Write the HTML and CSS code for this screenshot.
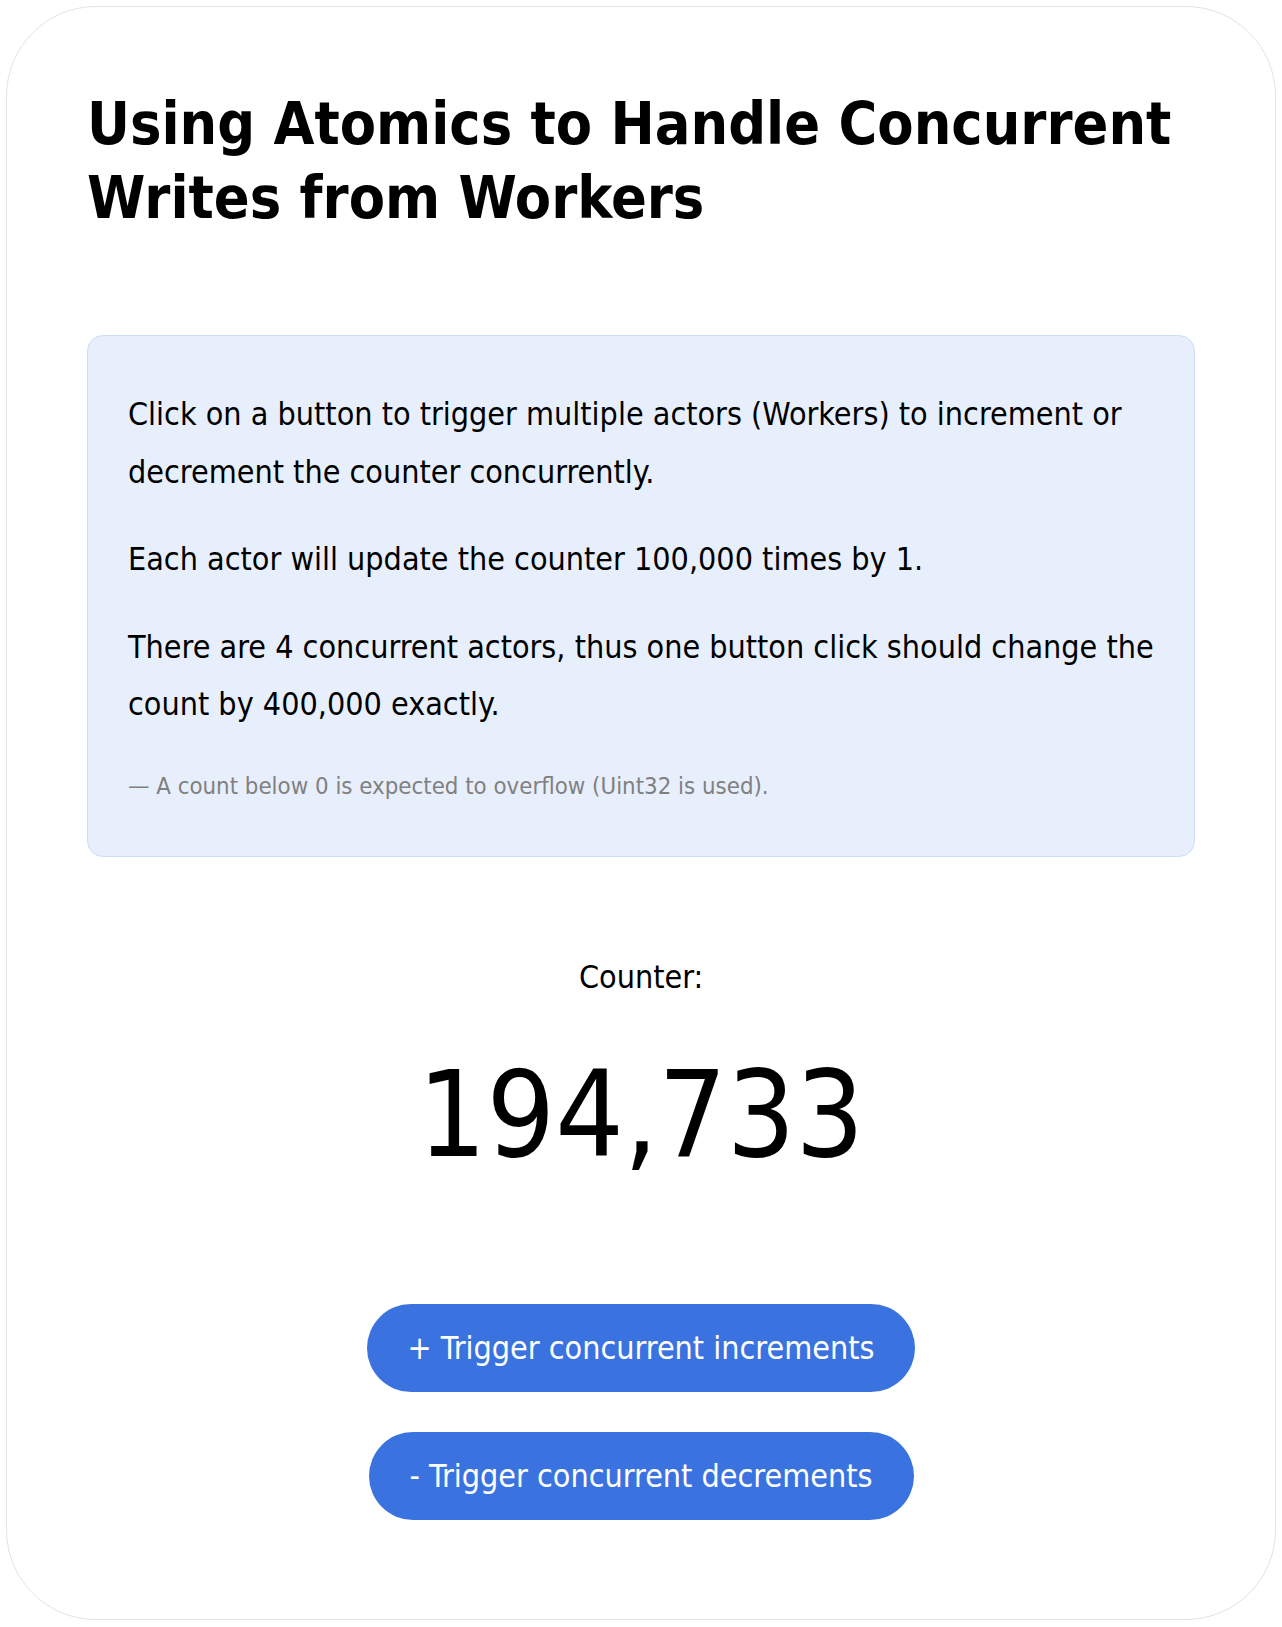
FILE: index.html
```html
<!DOCTYPE html>
<html lang="en">
<head>
<meta charset="utf-8">
<title>Using Atomics to Handle Concurrent Writes from Workers</title>
<link rel="stylesheet" href="styles.css">
</head>
<body>
<main class="card">
  <h1 class="title">Using Atomics to Handle Concurrent Writes from Workers</h1>
  <section class="info">
    <p class="info-text">Click on a button to trigger multiple actors (Workers) to increment or decrement the counter concurrently.</p>
    <p class="info-text">Each actor will update the counter 100,000 times by 1.</p>
    <p class="info-text">There are 4 concurrent actors, thus one button click should change the count by 400,000 exactly.</p>
    <p class="info-note">— A count below 0 is expected to overflow (Uint32 is used).</p>
  </section>
  <section class="counter">
    <p class="counter-label">Counter:</p>
    <p class="counter-value">194,733</p>
  </section>
  <div class="actions">
    <button class="btn" type="button">+ Trigger concurrent increments</button>
    <button class="btn" type="button">- Trigger concurrent decrements</button>
  </div>
</main>
</body>
</html>
```
FILE: styles.css
```css
html, body {
  margin: 0;
  padding: 0;
  background: #ffffff;
}

body {
  padding: 6px;
  font-family: "DejaVu Sans Condensed", "DejaVu Sans", sans-serif;
  font-stretch: semi-condensed;
  color: #000000;
}

.card {
  box-sizing: border-box;
  height: 1614px;
  border: 1px solid #e2e2e2;
  border-radius: 90px;
  padding: 80px;
  background: #ffffff;
}

.title {
  margin: 0 0 100px;
  font-size: 58.8px;
  line-height: 74px;
  font-weight: bold;
}

.info {
  background: #e8effc;
  border: 1px solid #cfddf7;
  border-radius: 16px;
  padding: 50px 40px 52px;
}

.info-text {
  margin: 0 0 30px;
  font-size: 32px;
  line-height: 57.6px;
}

.info-text:nth-of-type(3) {
  margin-bottom: 0;
}

.info-note {
  margin: 34px 0 0;
  font-size: 23.8px;
  line-height: 36px;
  color: #808080;
}

.counter {
  margin-top: 92px;
  text-align: center;
}

.counter-label {
  margin: 0;
  font-size: 32px;
  line-height: 57.6px;
}

.counter-value {
  margin: 36px 0 0;
  font-size: 120px;
  line-height: 144px;
}

.actions {
  margin-top: 117px;
  display: flex;
  flex-direction: column;
  align-items: center;
  gap: 40px;
}

.btn {
  font-family: inherit;
  font-stretch: inherit;
  font-size: 32px;
  line-height: 48px;
  padding: 20px 41px;
  border: none;
  border-radius: 999px;
  background: #3a73e0;
  color: #ffffff;
  cursor: pointer;
}
```
